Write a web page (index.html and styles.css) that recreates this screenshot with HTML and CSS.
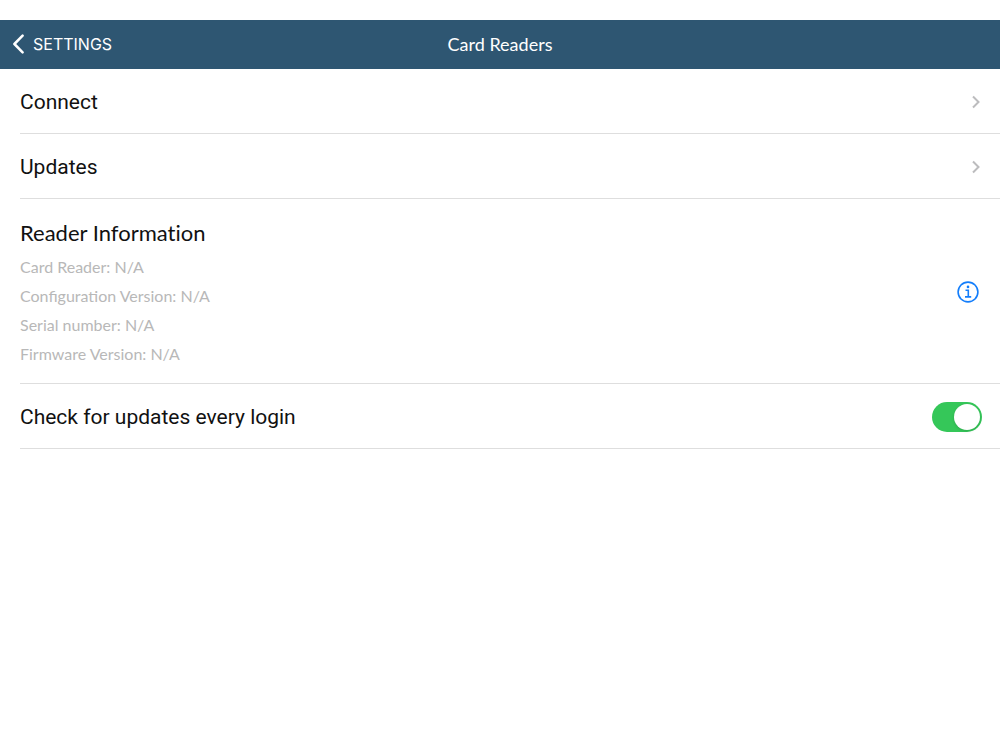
FILE: index.html
```html
<!DOCTYPE html>
<html lang="en">
<head>
<meta charset="utf-8">
<meta name="viewport" content="width=device-width, initial-scale=1">
<title>Card Readers</title>
<link rel="stylesheet" href="styles.css">
</head>
<body>
<header class="nav">
  <button class="back" type="button">
    <svg class="back-icon" viewBox="0 0 12 20" aria-hidden="true"><path d="M10.6 1.7 2.4 10l8.2 8.3"/></svg>
    <span>SETTINGS</span>
  </button>
  <h1 class="title">Card Readers</h1>
</header>
<main class="list">
  <a class="row" href="#connect">
    <span>Connect</span>
    <svg class="chevron" viewBox="0 0 8 14" aria-hidden="true"><path d="M1 1.5 6.5 7 1 12.5"/></svg>
  </a>
  <a class="row" href="#updates">
    <span>Updates</span>
    <svg class="chevron" viewBox="0 0 8 14" aria-hidden="true"><path d="M1 1.5 6.5 7 1 12.5"/></svg>
  </a>
  <section class="row reader">
    <div>
      <h2 class="heading">Reader Information</h2>
      <p class="detail">Card Reader: N/A</p>
      <p class="detail">Configuration Version: N/A</p>
      <p class="detail">Serial number: N/A</p>
      <p class="detail">Firmware Version: N/A</p>
    </div>
    <button class="info" type="button" aria-label="Reader details">
      <svg viewBox="0 0 22 22" aria-hidden="true"><circle cx="11" cy="11" r="9.9"/><path d="M8.5 9.2h2.8v6.5M8 15.9h6.2"/><circle class="dot" cx="11" cy="5.9" r="1.3"/></svg>
    </button>
  </section>
  <div class="row">
    <label for="auto-check">Check for updates every login</label>
    <input class="switch" id="auto-check" type="checkbox" role="switch" checked>
  </div>
</main>
</body>
</html>
```
FILE: styles.css
```css
* { box-sizing: border-box; }
body {
  margin: 0;
  padding-top: 20px;
  background: #fff;
  color: #111;
  font-family: Roboto, "Liberation Sans", sans-serif;
}
h1, h2, p { margin: 0; font-weight: 400; }
button { border: 0; padding: 0; background: none; cursor: pointer; }
svg { display: block; fill: none; stroke: currentColor; }
.nav {
  display: grid;
  grid-template-columns: 1fr auto 1fr;
  align-items: center;
  height: 49px;
  padding: 0 12px 1px;
  background: #2e5672;
  color: #fff;
}
.back {
  display: flex;
  align-items: center;
  gap: 9px;
  color: inherit;
  font: 16px/24px Inter, "Liberation Sans", sans-serif;
}
.back-icon { width: 12px; height: 20px; stroke-width: 2.5; stroke-linecap: round; stroke-linejoin: round; }
.title { font: 18px/24px Lato, sans-serif; }
.list { padding-left: 20px; }
.row {
  display: flex;
  align-items: center;
  justify-content: space-between;
  min-height: 65px;
  padding-top: 1px;
  padding-right: 20px;
  border-bottom: 1px solid #dedede;
  color: inherit;
  font-size: 21px;
  line-height: 28px;
  text-decoration: none;
}
.chevron { width: 8px; height: 14px; color: #bcbcbe; stroke-width: 2; }
.reader { padding-top: 20px; padding-bottom: 15px; font-family: Lato, sans-serif; }
.heading { margin-bottom: 5px; font-size: 22px; line-height: 28px; font-variant-ligatures: none; }
.detail { color: #b8b8b8; font-size: 16px; line-height: 29px; }
.info { margin: 0 1px 4px 0; color: #147efb; }
.info svg { width: 22px; height: 22px; stroke-width: 1.6; }
.info .dot { fill: currentColor; stroke: none; }
.switch {
  appearance: none;
  display: flex;
  width: 50px;
  height: 30px;
  margin: 0 -2px 0 0;
  padding: 2px;
  border-radius: 15px;
  background: #d9d9dc;
  cursor: pointer;
}
.switch::before {
  content: "";
  width: 26px;
  height: 26px;
  border-radius: 50%;
  background: #fff;
  box-shadow: 0 1px 3px rgba(0, 0, 0, 0.15);
}
.switch:checked { justify-content: flex-end; background: #35c759; }
```
